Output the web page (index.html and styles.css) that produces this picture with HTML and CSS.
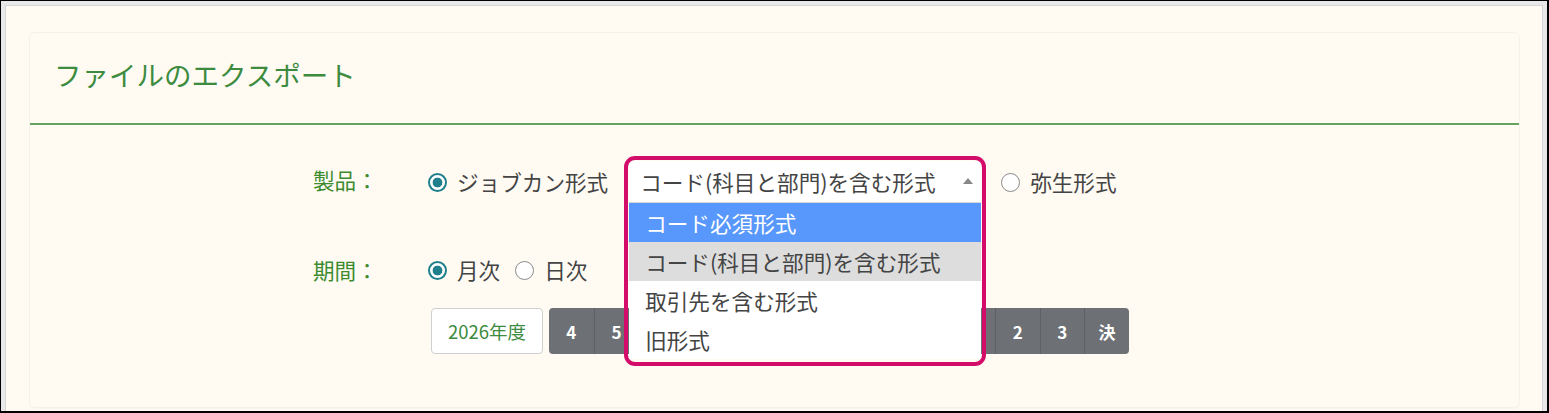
FILE: index.html
```html
<!DOCTYPE html>
<html lang="ja">
<head>
<meta charset="utf-8">
<title>ファイルのエクスポート</title>
<link rel="stylesheet" href="styles.css">
</head>
<body>
<div class="screen">
  <div class="page">
    <div class="panel">
      <h1 class="title">ファイルのエクスポート</h1>
      <div class="rule"></div>
      <div class="form">
        <div class="row row-product">
          <div class="label">製品：</div>
          <div class="controls">
            <label class="opt"><span class="radio on"></span><span class="opt-text">ジョブカン形式</span></label>
            <div class="select-wrap">
              <div class="select">
                <span class="select-text">コード(科目と部門)を含む形式</span>
                <span class="arrow"></span>
              </div>
              <ul class="dropdown">
                <li class="item hl">コード必須形式</li>
                <li class="item sel">コード(科目と部門)を含む形式</li>
                <li class="item">取引先を含む形式</li>
                <li class="item">旧形式</li>
              </ul>
              <div class="annot"></div>
            </div>
            <label class="opt opt-yayoi"><span class="radio"></span><span class="opt-text">弥生形式</span></label>
          </div>
        </div>
        <div class="row row-period">
          <div class="label">期間：</div>
          <div class="controls">
            <label class="opt"><span class="radio on"></span><span class="opt-text">月次</span></label>
            <label class="opt opt-day"><span class="radio"></span><span class="opt-text">日次</span></label>
          </div>
        </div>
        <div class="row row-months">
          <div class="label"></div>
          <div class="controls">
            <button class="year">2026年度</button>
            <div class="months">
              <span class="m">4</span><span class="m">5</span><span class="m covered">6</span><span class="m covered">7</span><span class="m covered">8</span><span class="m covered">9</span><span class="m covered">10</span><span class="m covered">11</span><span class="m covered">12</span><span class="m covered">1</span><span class="m">2</span><span class="m">3</span><span class="m">決</span>
            </div>
          </div>
        </div>
      </div>
    </div>
  </div>
</div>
</body>
</html>
```

FILE: styles.css
```css
* { box-sizing: border-box; }
html, body { margin: 0; padding: 0; }
body {
  font-family: "Noto Sans CJK JP", "Noto Sans", sans-serif;
  color: #444;
  background: #000;
}
.screen {
  width: 1549px;
  height: 413px;
  border-style: solid;
  border-color: #000;
  border-width: 1px 2px 2px 1px;
  background: #e8e8e8;
  padding: 4px 4px 0 4px;
}
.page {
  height: 100%;
  background: #fffbf3;
  border: 1px solid #d6d6d6;
  border-bottom: none;
  padding: 26px 22px 0 23px;
}
.panel {
  height: 376px;
  border: 1px solid #f6f2ea;
  border-radius: 6px;
  box-shadow: 0 1px 1px rgba(0,0,0,0.025);
  padding-top: 21px;
}
.title {
  margin: 0;
  padding-left: 24px;
  font-size: 27.5px;
  line-height: 40px;
  font-weight: normal;
  color: #3d8b3f;
}
.rule {
  margin-top: 29px;
  height: 2px;
  background: #63a35f;
}
.form {
  padding-left: 283px;
  margin-top: 34px;
}
.row {
  display: flex;
  align-items: center;
}
.row-product { height: 46px; }
.row-period { height: 30px; margin-top: 50px; }
.row-months { height: 46px; margin-top: 23px; }
.label {
  width: 115px;
  flex: none;
  font-size: 21.6px;
  color: #3d8b2f;
  line-height: 1;
}
.row-product .label { margin-top: -4px; }
.controls {
  display: flex;
  align-items: center;
}
.opt {
  display: flex;
  align-items: center;
  font-size: 21.6px;
  line-height: 1;
  color: #444;
}
.radio {
  width: 19px;
  height: 19px;
  border-radius: 50%;
  border: 1.5px solid #8a8a8a;
  background: #fff;
  margin-right: 10px;
  flex: none;
}
.radio.on {
  border: 2px solid #1f7f8c;
  background: radial-gradient(circle, #1f7f8c 0 4.6px, #fff 5.2px);
}
.opt-day { margin-left: 15px; }
.select-wrap {
  position: relative;
  z-index: 10;
  width: 352px;
  height: 42px;
  margin-left: 21px;
}
.select {
  height: 42px;
  background: #fff;
  display: flex;
  align-items: center;
  padding-left: 11px;
  padding-right: 8px;
  border-bottom: 1px solid #d8d8d8;
}
.select-text {
  flex: 1;
  font-size: 21.6px;
  line-height: 1;
  color: #444;
  white-space: nowrap;
}
.arrow {
  width: 0;
  height: 0;
  border-left: 5px solid transparent;
  border-right: 5px solid transparent;
  border-bottom: 6px solid #888;
  margin-top: -2px;
}
.dropdown {
  position: absolute;
  left: 0;
  right: 0;
  top: 42px;
  margin: 0;
  padding: 0;
  list-style: none;
  background: #fff;
}
.item {
  height: 39px;
  display: flex;
  align-items: center;
  padding-left: 16px;
  font-size: 21.6px;
  line-height: 1;
  color: #444;
  white-space: nowrap;
}
.item.hl { background: #5897fb; color: #fff; }
.item.sel { background: #dddddd; }
.annot {
  position: absolute;
  left: -5px;
  right: -5px;
  top: -5px;
  height: 210px;
  border: 4.5px solid #d30c6a;
  border-radius: 11px;
  pointer-events: none;
}
.opt-yayoi { margin-left: 20px; }
.year {
  margin-left: 3px;
  height: 46px;
  width: 112px;
  background: #fff;
  border: 1px solid #cfcfcf;
  border-radius: 4px;
  font-family: "Noto Sans CJK JP", "Noto Sans", sans-serif;
  font-size: 18.5px;
  color: #3d8b3f;
  padding: 0;
}
.months {
  margin-left: 6px;
  display: flex;
  height: 46px;
  background: #6d7074;
  border-radius: 4px;
  overflow: hidden;
}
.m {
  width: 44.6px;
  display: flex;
  align-items: center;
  justify-content: center;
  color: #fff;
  font-weight: bold;
  font-size: 17px;
  border-left: 1px solid #5e6164;
}
.m:first-child { border-left: none; }
.m.covered { visibility: hidden; }
```
